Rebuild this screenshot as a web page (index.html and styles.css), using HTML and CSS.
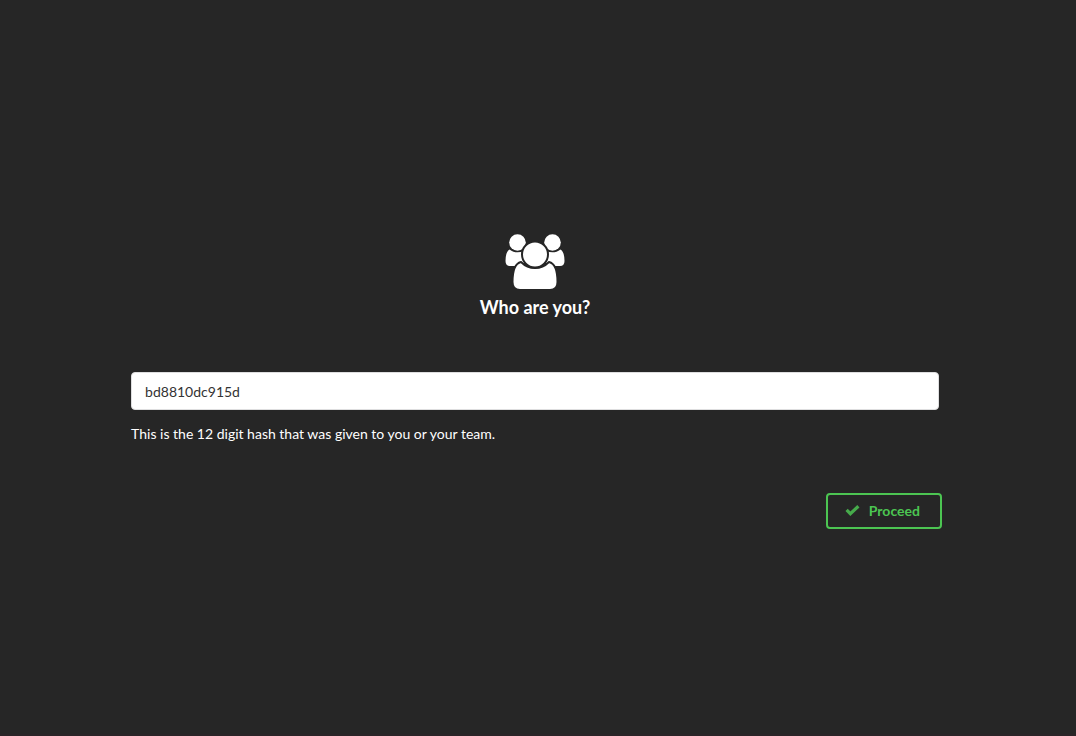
FILE: index.html
```html
<!DOCTYPE html>
<html lang="en">
<head>
<meta charset="utf-8">
<meta name="viewport" content="width=device-width, initial-scale=1">
<title>Who are you?</title>
<link rel="stylesheet" href="styles.css">
</head>
<body>
<main class="page">
  <form class="identity">
    <h1 class="title">
      <svg class="title-icon" viewBox="0 0 60 56" aria-hidden="true">
        <path d="M4.500 15.500C9 19 14 19 19 17V29H16Q12 30 10 32H5Q.5 32 .5 27Q.5 18 4.500 15.500Z"/>
        <path d="M55.500 15.500C51 19 46 19 41 17V29H44Q48 30 50 32H55Q59.500 32 59.500 27Q59.500 18 55.500 15.500Z"/>
        <circle cx="12.500" cy="8.500" r="8.300"/>
        <circle cx="47.500" cy="8.500" r="8.300"/>
        <path class="front" d="M16 28C24 36 36 36 44 28Q52.500 30 52.500 48Q52.500 56 45 56H15Q7.500 56 7.500 48Q7.500 30 16 28Z"/>
        <circle class="front" cx="30" cy="20.500" r="13"/>
      </svg>
      <span>Who are you?</span>
    </h1>
    <input class="hash-input" id="hash" type="text" value="bd8810dc915d">
    <label class="hint" for="hash">This is the 12 digit hash that was given to you or your team.</label>
    <button class="proceed" type="submit">
      <svg class="check" viewBox="0 0 14 12" aria-hidden="true"><path d="M1.500 5.500L5 9L12.500 2"/></svg>
      <span>Proceed</span>
    </button>
  </form>
</main>
</body>
</html>
```
FILE: styles.css
```css
* {
  box-sizing: border-box;
}

body {
  margin: 0;
  background: #262626;
  color: #fff;
  font-family: Lato, "Liberation Sans", sans-serif;
  font-size: 14px;
  line-height: 20px;
}

.page {
  display: flex;
  align-items: center;
  justify-content: center;
  min-height: 100vh;
  padding: 28px 6px 0 0;
  border-bottom: 2px solid #2a2427;
}

.identity {
  display: flex;
  flex-direction: column;
  width: 75.5%;
}

.title {
  display: flex;
  flex-direction: column;
  align-items: center;
  gap: 5px;
  margin: 0 0 53px;
  font-size: 18px;
  font-weight: 700;
  line-height: 24px;
}

.title-icon {
  width: 60px;
  height: 56px;
  fill: #fff;
}

.front {
  stroke: #262626;
  stroke-width: 2;
}

.hash-input {
  width: 100%;
  height: 38px;
  padding: 2px 13px 0;
  border: 1px solid #dededf;
  border-radius: 4px;
  background: #fff;
  color: #333;
  font: inherit;
}

.hint {
  margin-top: 14px;
}

.proceed {
  display: flex;
  align-items: center;
  align-self: flex-end;
  gap: 9px;
  height: 36px;
  margin: 49px -3px 0 0;
  padding: 0 20px 0 17px;
  border: 2px solid #4cc552;
  border-radius: 4px;
  background: transparent;
  color: #4cc552;
  font: inherit;
  font-weight: 700;
}

.check {
  width: 15px;
  height: 13px;
  fill: none;
  stroke: #46ab4b;
  stroke-width: 3;
}
```
